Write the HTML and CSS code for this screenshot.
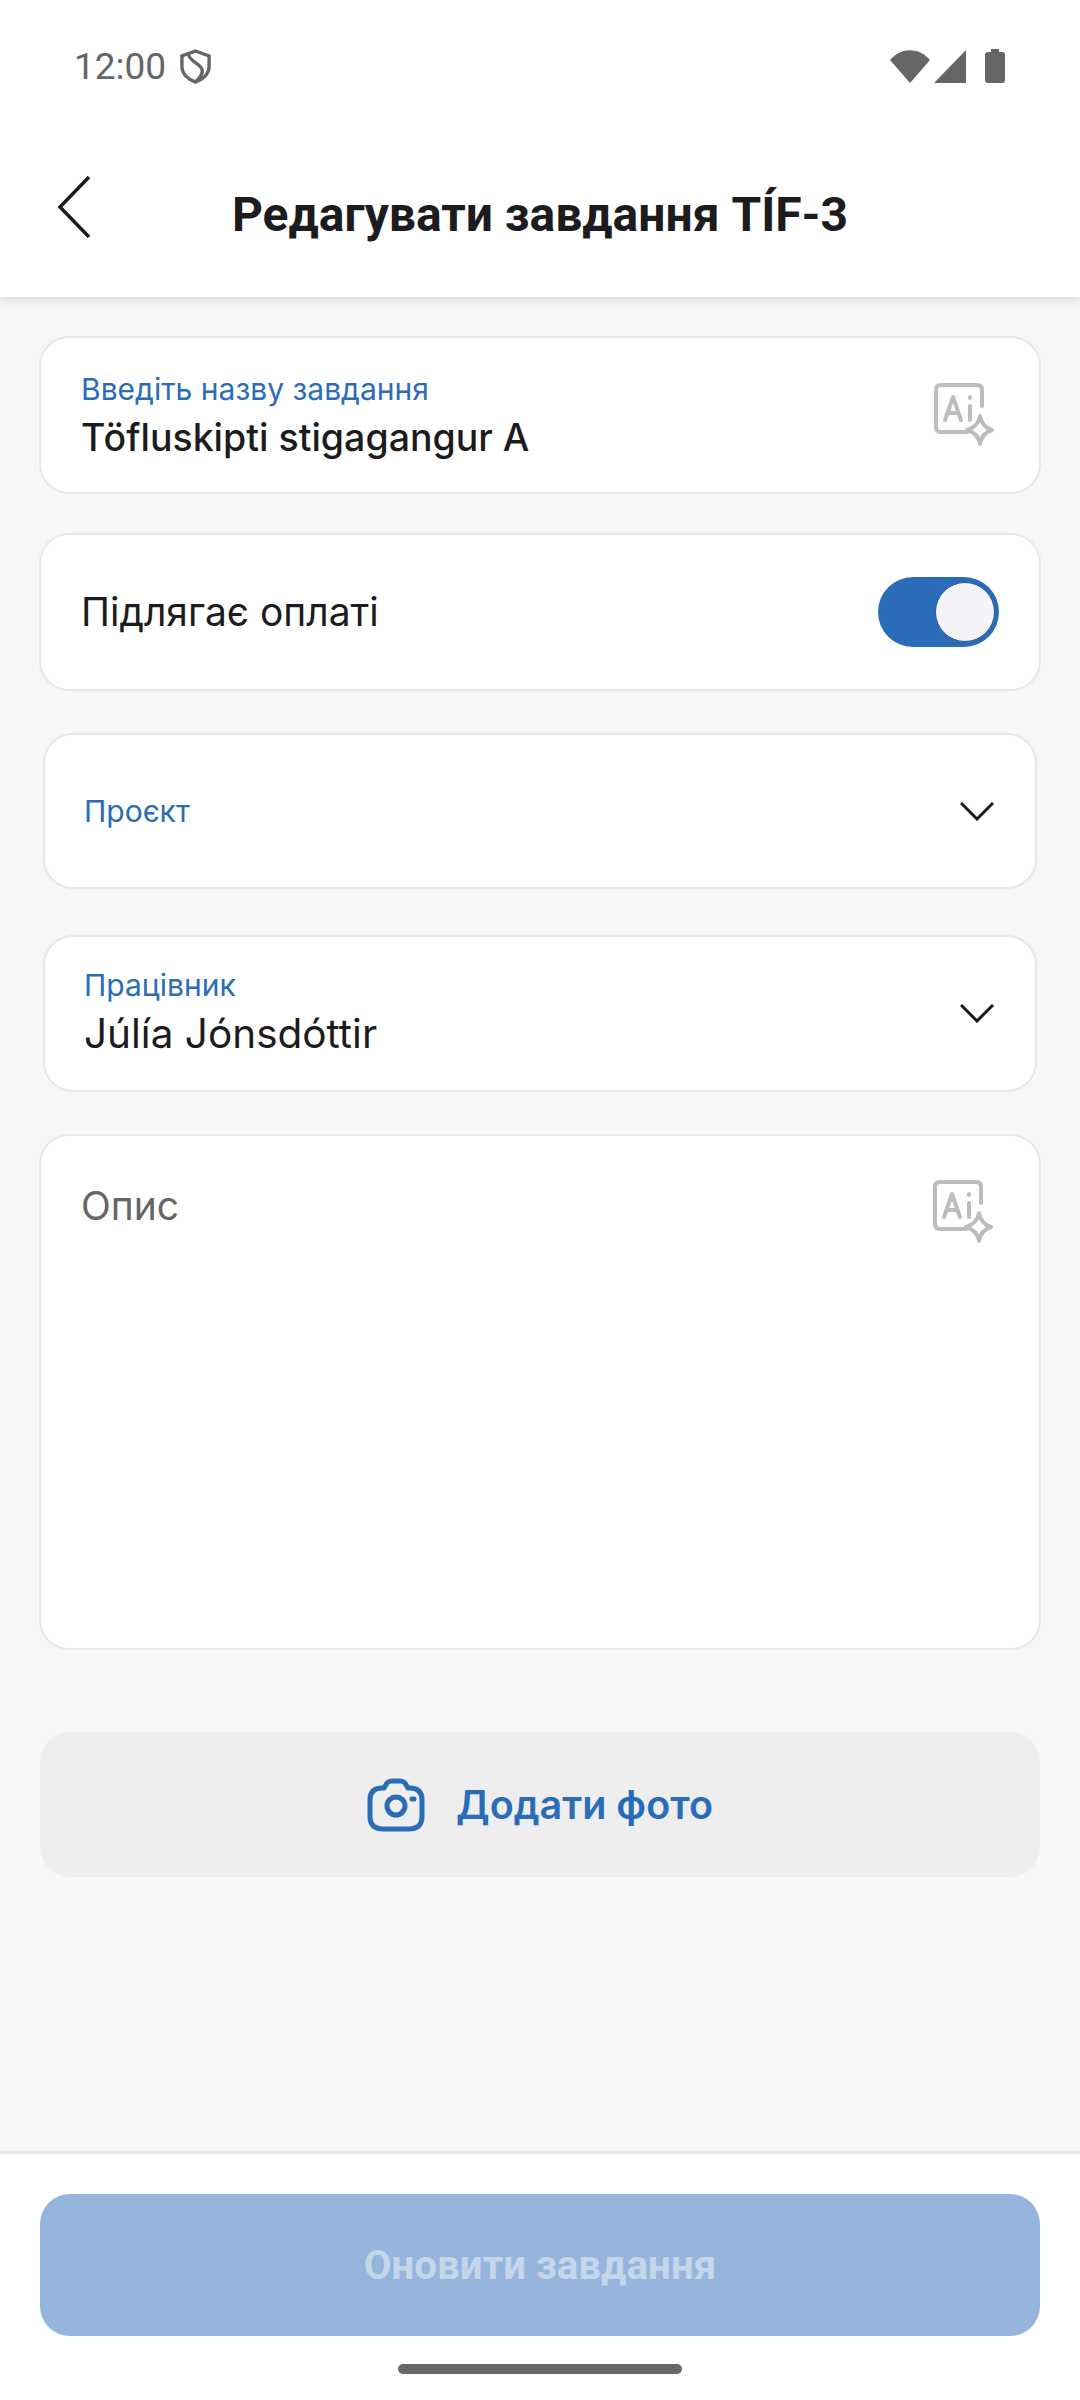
FILE: index.html
```html
<!DOCTYPE html>
<html lang="uk">

<head>
    <meta charset="UTF-8">
    <meta name="viewport" content="width=device-width, initial-scale=1.0">
    <title>Редагувати завдання</title>
    <link rel="stylesheet" href="styles.css">
</head>

<body>
    <div class="top">
        <div class="status">
            <div class="status-left">
                <span class="time">12:00</span>
                <svg width="31" height="37" viewBox="0 0 32 36" fill="none" stroke="#666" stroke-width="3.5">
                    <path d="M16 2 L30 7 V18 C30 26 23 32 16 34 C9 32 2 26 2 18 V7 Z" />
                    <path d="M9 6 C10 13 22 15 23 22 C23.500 26 20 30 17 33" />
                </svg>
            </div>
            <div class="status-right">
                <svg width="40" height="33" viewBox="0 0 40 33" fill="#666">
                    <path d="M0 10 C11 -3 29 -3 40 10 L20 33 Z" />
                </svg>
                <svg width="32" height="33" viewBox="0 0 32 33" fill="#666">
                    <path d="M32 0 V33 H0 Z" />
                </svg>
                <svg width="20" height="34" viewBox="0 0 20 34" fill="#666">
                    <path d="M6 0 H14 V3 H17 Q20 3 20 6 V31 Q20 34 17 34 H3 Q0 34 0 31 V6 Q0 3 3 3 H6 Z" />
                </svg>
            </div>
        </div>
        <div class="header">
            <svg class="back" width="34" height="62" viewBox="0 0 34 62" fill="none" stroke="#1c1c1e" stroke-width="3.500">
                <path d="M32 1 L3 31 L32 61" />
            </svg>
            <h1 class="title">Редагувати завдання TÍF-3</h1>
        </div>
    </div>

    <main class="form">
        <div class="card card-name">
            <div class="field">
                <span class="label">Введіть назву завдання</span>
                <span class="value value-medium">Töfluskipti stigagangur A</span>
            </div>
            <svg class="ai" width="62" height="64" viewBox="0 0 62 64" fill="none" stroke="#bdbdbd" stroke-width="4" stroke-linecap="round" stroke-linejoin="round">
                <path d="M34 50 H8 Q3 50 3 45 V8 Q3 3 8 3 H44 Q49 3 49 8 V24" />
                <path d="M12 38 L20 15 L28 38 M15 31 H25" />
                <path d="M37 24 V38" />
                <path d="M37 15 V16" />
                <path d="M47 34 Q49 45 59 48 Q49 51 47 62 Q45 51 34 48 Q45 45 47 34 Z" />
            </svg>
        </div>

        <div class="card card-pay">
            <span class="value">Підлягає оплаті</span>
            <div class="toggle">
                <div class="knob"></div>
            </div>
        </div>

        <div class="card card-select card-project">
            <span class="label">Проєкт</span>
            <svg class="chevron" width="34" height="19" viewBox="0 0 34 19" fill="none" stroke="#1c1c1e" stroke-width="3">
                <path d="M1 1 L17 17 L33 1" />
            </svg>
        </div>

        <div class="card card-select card-worker">
            <div class="field">
                <span class="label">Працівник</span>
                <span class="value">Júlía Jónsdóttir</span>
            </div>
            <svg class="chevron" width="34" height="19" viewBox="0 0 34 19" fill="none" stroke="#1c1c1e" stroke-width="3">
                <path d="M1 1 L17 17 L33 1" />
            </svg>
        </div>

        <div class="card card-desc">
            <span class="placeholder">Опис</span>
            <svg class="ai" width="62" height="64" viewBox="0 0 62 64" fill="none" stroke="#bdbdbd" stroke-width="4" stroke-linecap="round" stroke-linejoin="round">
                <path d="M34 50 H8 Q3 50 3 45 V8 Q3 3 8 3 H44 Q49 3 49 8 V24" />
                <path d="M12 38 L20 15 L28 38 M15 31 H25" />
                <path d="M37 24 V38" />
                <path d="M37 15 V16" />
                <path d="M47 34 Q49 45 59 48 Q49 51 47 62 Q45 51 34 48 Q45 45 47 34 Z" />
            </svg>
        </div>

        <button class="photo">
            <svg width="58" height="54" viewBox="0 0 58 54" fill="none" stroke="#2b6cb8" stroke-width="5" stroke-linecap="round" stroke-linejoin="round">
                <path d="M3 22 Q3 10 15 10 H17 L20 5 Q22 3 25 3 H33 Q36 3 38 5 L41 10 H43 Q55 10 55 22 V38 Q55 51 42 51 H16 Q3 51 3 38 Z" />
                <circle cx="29" cy="28" r="9" />
                <path d="M45 21 H47" />
            </svg>
            <span>Додати фото</span>
        </button>
    </main>

    <div class="footer">
        <button class="submit">Оновити завдання</button>
        <div class="home-bar"></div>
    </div>
</body>

</html>
```

FILE: styles.css
```css
* {
    box-sizing: border-box;
}
body {
    margin: 0;
    width: 1080px;
    height: 2400px;
    display: flex;
    flex-direction: column;
    background: #f6f7f9;
    font-family: Inter, "Noto Sans", sans-serif;
    color: #1c1c1e;
}

/* status bar + title */
.top {
    height: 297px;
    background: #fff;
    box-shadow: 0 2px 10px rgba(0, 0, 0, .14);
}
.status {
    display: flex;
    justify-content: space-between;
    align-items: center;
    height: 66px;
    margin-top: 33px;
    padding: 0 75px 0 74px;
}
.status-left, .status-right {
    display: flex;
    align-items: center;
}
.status-left {
    gap: 14px;
}
.status-right {
    gap: 4px;
}
.status-right svg:last-child {
    margin-left: 15px;
}
.time {
    font-family: Roboto, sans-serif;
    font-size: 37px;
    color: #666;
}
.header {
    display: grid;
    grid-template-columns: 34px 1fr 91px;
    align-items: center;
    height: 186px;
    margin-top: 12px;
    padding-left: 57px;
}
.back {
    margin-top: 6px;
}
.title {
    margin: 0;
    padding-top: 20px;
    font-family: Roboto, sans-serif;
    font-size: 48px;
    font-weight: 700;
    text-align: center;
    white-space: nowrap;
}

/* form */
.form {
    flex: 1;
    display: flex;
    flex-direction: column;
    padding: 39px 39px 0;
}
.card {
    display: flex;
    justify-content: space-between;
    background: #fff;
    border: 2px solid #e8e8e8;
    border-radius: 30px;
}
.field {
    display: flex;
    flex-direction: column;
    gap: 9px;
}
.label {
    font-size: 30px;
    line-height: 34px;
    color: #2b6cb8;
}
.value {
    font-size: 39px;
    line-height: 46px;
}
.value-medium {
    font-size: 37.500px;
    font-weight: 500;
    font-variant-ligatures: common-ligatures;
}
.placeholder {
    margin-top: 4px;
    font-size: 39px;
    line-height: 46px;
    color: #666;
}
.card-name {
    height: 158px;
    padding: 34px 44px 0 40px;
}
.ai {
    margin-top: 10px;
}
.card-pay {
    height: 158px;
    margin-top: 39px;
    align-items: center;
    padding: 0 40px;
}
.toggle {
    display: flex;
    justify-content: flex-end;
    align-items: center;
    width: 121px;
    height: 70px;
    padding-right: 4px;
    background: #2b6cb8;
    border-radius: 35px;
}
.knob {
    width: 60px;
    height: 60px;
    background: #f4f3f8;
    border: 1px solid #2a5c9c;
    border-radius: 50%;
}
.card-select {
    align-items: center;
    height: 156px;
    margin: 42px 4px 0;
    padding: 0 41px 0 39px;
}
.card-worker {
    height: 157px;
    margin-top: 46px;
}
.card-worker .field {
    margin-bottom: 3px;
}
.card-worker .value {
    font-size: 40.500px;
}
.card-desc {
    height: 516px;
    margin-top: 42px;
    padding: 43px 45px 0 40px;
    align-items: flex-start;
}
.card-desc .ai {
    margin-top: 0;
}
.photo {
    display: flex;
    align-items: center;
    justify-content: center;
    gap: 31px;
    height: 145px;
    margin: 82px 1px 0;
    padding: 0;
    background: #eeeeee;
    border: 0;
    border-radius: 30px;
    font-family: Inter, sans-serif;
    font-size: 39.500px;
    font-weight: 600;
    color: #2b6cb8;
}

/* bottom action */
.footer {
    display: flex;
    flex-direction: column;
    align-items: center;
    height: 249px;
    padding-top: 40px;
    background: #fff;
    border-top: 3px solid #e8e8e8;
}
.submit {
    width: 1000px;
    height: 142px;
    background: #96b5dc;
    border: 0;
    border-radius: 30px;
    font-family: Roboto, sans-serif;
    font-size: 40.300px;
    font-weight: 700;
    color: #c5d5ea;
}
.home-bar {
    width: 284px;
    height: 10px;
    margin-top: 28px;
    background: #666;
    border-radius: 5px;
}
```
